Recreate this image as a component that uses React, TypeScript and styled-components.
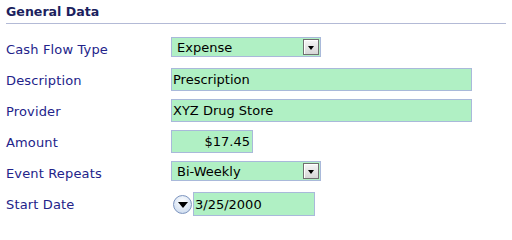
import React from "react";
import styled, { createGlobalStyle } from "styled-components";

const Global = createGlobalStyle`
  html, body { margin: 0; padding: 0; background: #ffffff; }
  body { font-family: "DejaVu Sans", Verdana, sans-serif; font-size: 13px; }
`;

const Panel = styled.div`
  width: 500px;
  margin: 0 6px;
`;

const Header = styled.div`
  padding: 4px 0 4px 0;
  height: 15px;
  line-height: 15px;
  font-weight: bold;
  font-size: 12.6px;
  color: #1c1f5e;
  border-bottom: 1px solid #b3bad6;
`;

const Form = styled.div`
  margin-top: 9px;
  display: grid;
  grid-template-columns: 165px 1fr;
  grid-auto-rows: 31px;
`;

const Label = styled.div`
  display: flex;
  align-items: center;
  padding-top: 2px;
  color: #23238a;
  font-size: 13px;
  letter-spacing: 0.15px;
`;

const Cell = styled.div`
  display: flex;
  align-items: flex-start;
  padding-top: 4px;
`;

const TextBox = styled.input<{ $w: number; $right?: boolean; $h?: number }>`
  box-sizing: border-box;
  width: ${(p) => p.$w}px;
  height: ${(p) => p.$h ?? 23}px;
  margin: 0;
  padding: 0 ${(p) => (p.$right ? 2 : 1)}px 0 1px;
  border: 1px solid #a9b9da;
  background: #b0f0c4;
  font-family: "DejaVu Sans", Verdana, sans-serif;
  font-size: 13px;
  color: #000;
  text-align: ${(p) => (p.$right ? "right" : "left")};
  outline: none;
`;

const Select = styled.div`
  box-sizing: border-box;
  width: 150px;
  height: 20px;
  border: 1px solid #a9b9da;
  background: #b0f0c4;
  display: flex;
  align-items: center;
  justify-content: space-between;
  padding: 0 1px 0 5px;
  font-size: 13px;
  color: #000;
`;

const SelectButton = styled.div`
  box-sizing: border-box;
  width: 16px;
  height: 16px;
  border: 1px solid #6f6f6f;
  background: linear-gradient(#f6f6f6, #d6d6d6);
  box-shadow: inset 1px 1px 0 #ffffff;
  display: flex;
  align-items: center;
  justify-content: center;
  &::after {
    content: "";
    width: 0;
    height: 0;
    border-left: 3.5px solid transparent;
    border-right: 3.5px solid transparent;
    border-top: 4px solid #000;
    margin-top: 1px;
  }
`;

const DateRow = styled.div`
  display: flex;
  align-items: center;
  gap: 1px;
  margin-left: 2px;
`;

const RoundButton = styled.div`
  box-sizing: border-box;
  width: 19px;
  height: 19px;
  border-radius: 50%;
  border: 1px solid #7d95bf;
  background: radial-gradient(circle at 50% 35%, #ffffff, #d6e2f2 70%, #b9cbe6);
  display: flex;
  align-items: center;
  justify-content: center;
  &::after {
    content: "";
    width: 0;
    height: 0;
    border-left: 5px solid transparent;
    border-right: 5px solid transparent;
    border-top: 6px solid #000;
    margin-top: 2px;
  }
`;

export default function App() {
  return (
    <>
      <Global />
      <Panel>
        <Header>General Data</Header>
        <Form>
          <Label>Cash Flow Type</Label>
          <Cell>
            <Select>
              <span>Expense</span>
              <SelectButton />
            </Select>
          </Cell>
          <Label>Description</Label>
          <Cell>
            <TextBox $w={301} readOnly value="Prescription" />
          </Cell>
          <Label>Provider</Label>
          <Cell>
            <TextBox $w={301} readOnly value="XYZ Drug Store" />
          </Cell>
          <Label>Amount</Label>
          <Cell>
            <TextBox $w={82} $right readOnly value="$17.45" />
          </Cell>
          <Label>Event Repeats</Label>
          <Cell>
            <Select>
              <span>Bi-Weekly</span>
              <SelectButton />
            </Select>
          </Cell>
          <Label>Start Date</Label>
          <Cell>
            <DateRow>
              <RoundButton />
              <TextBox $w={122} $h={24} readOnly value="3/25/2000" />
            </DateRow>
          </Cell>
        </Form>
      </Panel>
    </>
  );
}
